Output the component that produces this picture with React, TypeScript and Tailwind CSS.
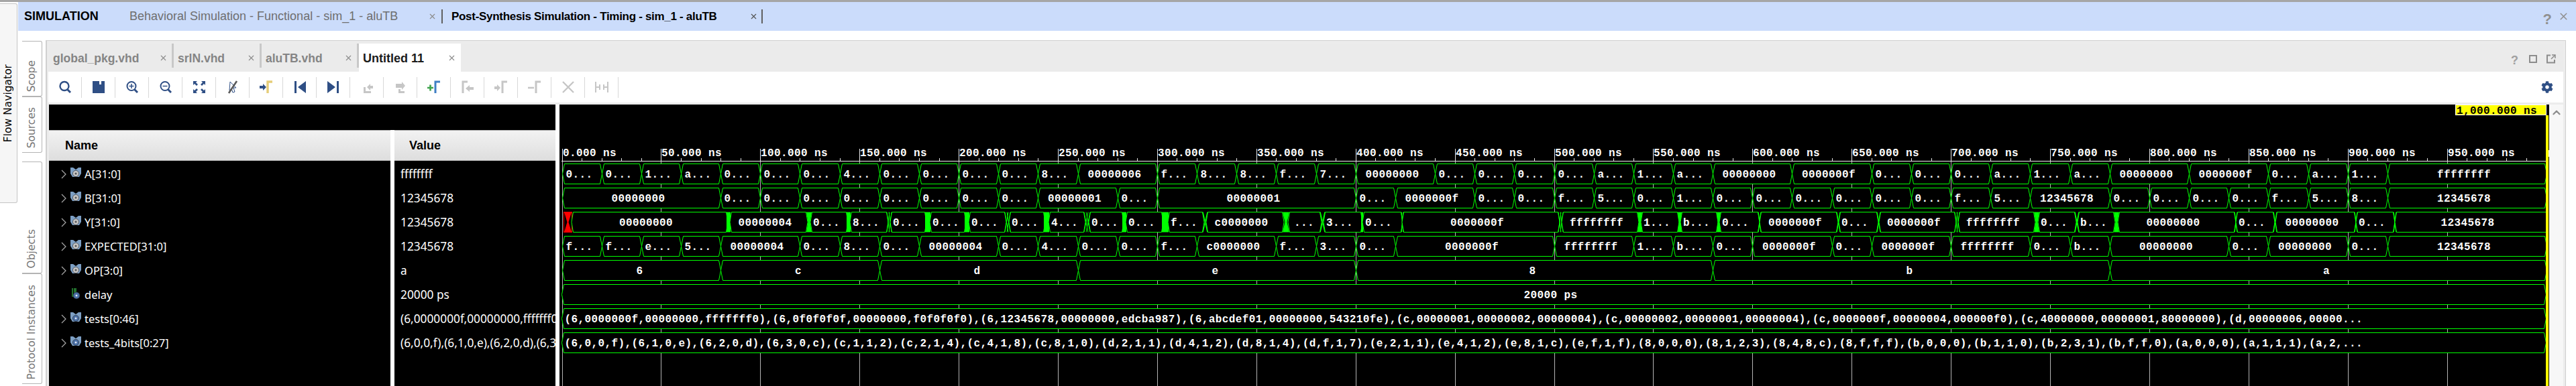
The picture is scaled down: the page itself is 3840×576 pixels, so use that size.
import { ChevronUp, X } from "lucide-react"
import { FaCog } from "react-icons/fa"

const GREEN = "#00ff00"
const NS20 = 59.16
const T0 = 837.5

const xAt = (i: number) => Math.round(T0 + NS20 * i) + 0.5

const rowA = "0 0 1 a 0 0 0 4 0 0 0 0 8 00000006*2 f 8 8 f 7 00000000*2 0 0 0 0 a 1 a 00000000*2 0000000f*2 0 0 0 a 1 a 00000000*2 0000000f*2 0 a 1 ffffffff*4"
const rowB = "00000000*4 0 0 0 0 0 0 0 0 00000001*2 0 00000001*5 0 0000000f*2 0 0 f 5 0 1 0 0 0 0 0 0 f 5 12345678*2 0 0 0 0 f 5 8 12345678*4"
const rowE = "f f e 5 00000004*2 0 8 0 00000004*2 0 4 0 0 f c0000000*2 f 3 0 0000000f*4 ffffffff*2 1 b 0 0000000f*2 0 0000000f*2 ffffffff*2 0 b 00000000*3 0 00000000*2 0 12345678*4"
const rowOp = "6*4 c*4 d*5 e*7 8*9 b*10 a*11"

const testsText =
  "(6,0000000f,00000000,fffffff0),(6,0f0f0f0f,00000000,f0f0f0f0),(6,12345678,00000000,edcba987),(6,abcdef01,00000000,543210fe),(c,00000001,00000002,00000004),(c,00000002,00000001,00000004),(c,0000000f,00000004,000000f0),(c,40000000,00000001,80000000),(d,00000006,00000..."
const tests4Text =
  "(6,0,0,f),(6,1,0,e),(6,2,0,d),(6,3,0,c),(c,1,1,2),(c,2,1,4),(c,4,1,8),(c,8,1,0),(d,2,1,1),(d,4,1,2),(d,8,1,4),(d,f,1,7),(e,2,1,1),(e,4,1,2),(e,8,1,c),(e,f,1,f),(8,0,0,0),(8,1,2,3),(8,4,8,c),(8,f,f,f),(b,0,0,0),(b,1,1,0),(b,2,3,1),(b,f,f,0),(a,0,0,0),(a,1,1,1),(a,2,..."

// Y row settles late, so it is read off by pixel: start, end, label, glitch after it
const rowY: [number, number, string, string][] = [
  [854, 1082, "00000000", "s"],
  [1090, 1201, "00000004", "h"],
  [1210, 1261, "0...", "s"],
  [1269, 1321, "8...", "m"],
  [1329, 1378, "0...", "s"],
  [1388, 1437, "0...", "s"],
  [1446, 1497, "0...", "m"],
  [1506, 1555, "0...", "s"],
  [1565, 1615, "4...", "m"],
  [1625, 1672, "0...", "s"],
  [1680, 1731, "0...", "s"],
  [1743, 1792, "f...", "x"],
  [1800, 1911, "c0000000", "h"],
  [1922, 1967, "...", "x"],
  [1975, 2028, "3...", "s"],
  [2033, 2088, "0...", "x"],
  [2092, 2322, "0000000f", "m"],
  [2330, 2440, "ffffffff", "h"],
  [2448, 2500, "1...", "h"],
  [2507, 2558, "b...", "h"],
  [2565, 2620, "0...", "x"],
  [2625, 2737, "0000000f", "x"],
  [2743, 2797, "0...", "x"],
  [2803, 2913, "0000000f", "m"],
  [2921, 3031, "ffffffff", "h"],
  [3040, 3092, "0...", "x"],
  [3099, 3150, "b...", "h"],
  [3159, 3330, "00000000", "x"],
  [3335, 3388, "0...", "x"],
  [3394, 3509, "00000000", "x"],
  [3514, 3567, "0...", "x"],
  [3572, 3795, "12345678", ""],
]

const waveText = "fill-white text-[16px] font-bold tracking-[0.4px]"

function hexPoints(x0: number, x1: number, top: number, slope: number) {
  const mid = top + 15
  const bot = top + 30
  return `${x0 - slope},${mid} ${x0},${top} ${x1},${top} ${x1 + slope},${mid} ${x1},${bot} ${x0},${bot}`
}

function Bus({ row, top }: { row: string; top: number }) {
  let idx = 0
  const y = top + 0.5
  return (
    <g>
      {row.split(" ").map((tok, n) => {
        const [label, s] = tok.split("*")
        const span = s ? Number(s) : 1
        const a = xAt(idx)
        const b = xAt(idx + span)
        idx += span
        const center = (a + b) / 2 - (label.length > 1 ? 5 : 3)
        return (
          <g key={n}>
            <polygon points={hexPoints(a + 3, b - 3, y, 3)} fill="black" stroke={GREEN} />
            {span === 1 ? (
              <text x={a + 5} y={top + 21} className={waveText}>{label + "..."}</text>
            ) : (
              <text x={center} y={top + 21} textAnchor="middle" className={waveText}>{label}</text>
            )}
          </g>
        )
      })}
    </g>
  )
}

function Glitch({ a, b, y, kind }: { a: number; b: number; y: number; kind: string }) {
  const bot = y + 30
  const mid = y + 15
  const c = (a + b) / 2
  if (kind === "s") return <rect x={a} y={y} width={b - a - 1} height={30} fill={GREEN} />
  if (kind === "h")
    return <polygon points={`${a},${y} ${b},${y} ${c + 1.5},${mid} ${b},${bot} ${a},${bot} ${c - 1.5},${mid}`} fill={GREEN} />
  if (kind === "m")
    return (
      <g stroke={GREEN}>
        <line x1={a} y1={y} x2={b - 3} y2={bot} />
        <line x1={b - 3} y1={y} x2={a} y2={bot} />
        <line x1={a + 3} y1={y} x2={b} y2={bot} />
        <line x1={b} y1={y} x2={a + 3} y2={bot} />
      </g>
    )
  return (
    <g stroke={GREEN} strokeWidth={1.4}>
      <line x1={a} y1={y} x2={b} y2={bot} />
      <line x1={b} y1={y} x2={a} y2={bot} />
    </g>
  )
}

function YBus({ top }: { top: number }) {
  const y = top + 0.5
  return (
    <g>
      <rect x={840.5} y={y} width={12} height={30} fill="black" stroke="#ff0000" />
      <polygon points={`841,${y} 852,${y} 847.5,${y + 15} 852,${y + 30} 841,${y + 30} 845.5,${y + 15}`} fill="#ff0000" />
      {rowY.map(([x0, x1, label, glitch], n) => {
        const long = label.length > 4
        return (
          <g key={n}>
            <polygon points={hexPoints(x0 + 0.5, x1 + 0.5, y, 2.5)} fill="black" stroke={GREEN} />
            {glitch && n < rowY.length - 1 && <Glitch a={x1 + 1} b={rowY[n + 1][0]} y={y} kind={glitch} />}
            {long ? (
              <text x={(x0 + x1) / 2 - 5} y={top + 21} textAnchor="middle" className={waveText}>{label}</text>
            ) : (
              <text x={label === "..." ? x0 + 7 : x0 + 2} y={top + 21} className={waveText}>{label}</text>
            )}
          </g>
        )
      })}
    </g>
  )
}

function TextBus({ top, children, center }: { top: number; children: string; center?: boolean }) {
  const y = top + 0.5
  return (
    <g>
      <polygon points={hexPoints(840.5, 3792.5, y, 3)} fill="black" stroke={GREEN} />
      {center ? (
        <text x={2311.5} y={top + 21} textAnchor="middle" className={waveText}>{children}</text>
      ) : (
        <text x={841.5} y={top + 21} className={waveText}>{children}</text>
      )}
    </g>
  )
}

function WaveView() {
  const majors = Array.from({ length: 20 }, (_, i) => i)
  const minors = Array.from({ length: 100 }, (_, i) => i).filter((i) => i % 5 !== 0)
  return (
    <svg viewBox="834 156 2966 420" className="w-[2966px] h-[420px] bg-black [font-family:'Liberation_Mono',monospace]">
      {majors.map((i) => {
        const x = xAt(i * 2.5)
        return (
          <g key={i}>
            <line x1={x} y1={240} x2={x} y2={576} stroke="#b4b4b4" />
            <line x1={x} y1={222} x2={x} y2={240} stroke="#e8e8e8" />
            <text x={x + 0.5} y={233} className={waveText}>{`${i * 50}.000 ns`}</text>
          </g>
        )
      })}
      {minors.map((i) => {
        const x = xAt(i * 0.5)
        return <line key={i} x1={x} y1={236} x2={x} y2={240} stroke="#e0e0e0" />
      })}
      <rect x={837} y={240} width={2958} height={1} fill="#f0f0f0" />
      <Bus row={rowA} top={244} />
      <Bus row={rowB} top={280} />
      <YBus top={316} />
      <Bus row={rowE} top={352} />
      <Bus row={rowOp} top={388} />
      <TextBus top={424} center>20000 ps</TextBus>
      <TextBus top={460}>{testsText}</TextBus>
      <TextBus top={496}>{tests4Text}</TextBus>
      {/* cursor */}
      <rect x={3798} y={224} width={2} height={10} fill="#e8e8e8" />
      <rect x={3795} y={172} width={4} height={404} fill="#ffff00" />
      <rect x={3660.5} y={156.5} width={135} height={15} fill="#ffff00" stroke="white" />
      <text x={3662} y={170} className="fill-black text-[16px] font-bold tracking-[0.4px]">1,000.000 ns</text>
    </svg>
  )
}

function BusIcon({ kind }: { kind: "v" | "c" | "g" }) {
  const prong = kind === "g" ? "#2f9e3f" : "#7d9fc4"
  const ball = kind === "v" ? "#c4c4c4" : "#4a6fa5"
  return (
    <svg width="16" height="17" viewBox="0 0 16 17" className="shrink-0">
      {kind === "g" ? (
        <path d="M3 0v12h3V0M8 0v8" fill="none" stroke={prong} strokeWidth="1.4" />
      ) : (
        <path d="M0 0h4l4 3 4-3h4v9l-3 5H3L0 9z" fill={prong} />
      )}
      <circle cx={kind === "g" ? 9 : 8} cy={kind === "g" ? 11 : 9} r={kind === "g" ? 5 : 4.6} fill={ball} stroke="#222" strokeWidth="0.6" />
      <circle cx={kind === "g" ? 9 : 8} cy={kind === "g" ? 11 : 9} r="1.5" fill={kind === "v" ? "#555" : "#dbe6f5"} />
    </svg>
  )
}

const signals: { name: string; value: string; kind: "v" | "c" | "g"; expand: boolean }[] = [
  { name: "A[31:0]", value: "ffffffff", kind: "v", expand: true },
  { name: "B[31:0]", value: "12345678", kind: "v", expand: true },
  { name: "Y[31:0]", value: "12345678", kind: "v", expand: true },
  { name: "EXPECTED[31:0]", value: "12345678", kind: "v", expand: true },
  { name: "OP[3:0]", value: "a", kind: "v", expand: true },
  { name: "delay", value: "20000 ps", kind: "g", expand: false },
  { name: "tests[0:46]", value: "(6,0000000f,00000000,fffffff0", kind: "c", expand: true },
  { name: "tests_4bits[0:27]", value: "(6,0,0,f),(6,1,0,e),(6,2,0,d),(6,3,0", kind: "c", expand: true },
]

const BLUE = "#2f4f85"
const OFF = "#c6c6c6"

function ToolIcon({ children }: { children: React.ReactNode }) {
  return (
    <svg width="24" height="24" viewBox="0 0 24 24" className="shrink-0">
      {children}
    </svg>
  )
}

const tools = [
  <>
    <circle cx="11" cy="10.5" r="6.5" fill="none" stroke={BLUE} strokeWidth="2.4" />
    <path d="M15.5 15.5l4.5 4.5" stroke={BLUE} strokeWidth="3" />
  </>,
  <path d="M3 3h18v18H3zM13 3v5h3V3z" fill={BLUE} fillRule="evenodd" />,
  <>
    <circle cx="11" cy="10.5" r="6.5" fill="none" stroke={BLUE} strokeWidth="2" />
    <path d="M15.5 15.5l4.5 4.5" stroke={BLUE} strokeWidth="3" />
    <path d="M11 7v7M7.5 10.5h7" stroke={BLUE} strokeWidth="1.5" />
  </>,
  <>
    <circle cx="11" cy="10.5" r="6.5" fill="none" stroke={BLUE} strokeWidth="2" />
    <path d="M15.5 15.5l4.5 4.5" stroke={BLUE} strokeWidth="3" />
    <path d="M7.5 10.5h7" stroke={BLUE} strokeWidth="1.5" />
  </>,
  <path d="M3 3h6L7 5l3 3-2 2-3-3-2 2zM21 3h-6l2 2-3 3 2 2 3-3 2 2zM3 21h6l-2-2 3-3-2-2-3 3-2-2zM21 21h-6l2-2-3-3 2-2 3 3 2-2z" fill={BLUE} />,
  <>
    <path d="M8 4l9 9h-4l2 6-3 1-2-6-3 3z" fill="none" stroke={BLUE} strokeWidth="1" />
    <path d="M18 3L6 21" stroke="#5a5a5a" strokeWidth="2.6" />
  </>,
  <>
    <path d="M2 10h5V7l5 5-5 5v-3H2z" fill={BLUE} />
    <path d="M14 21V4h7" fill="none" stroke="#e6cd78" strokeWidth="3.4" />
  </>,
  <path d="M4 3h3v18H4zM21 3v18L9 12z" fill={BLUE} />,
  <path d="M17 3h3v18h-3zM3 3v18l12-9z" fill={BLUE} />,
  <>
    <path d="M4 21h14v-3h-8v-6H7v9z" fill={OFF} />
    <path d="M12 12l5-5v3h4v4h-4v3z" fill={OFF} />
  </>,
  <>
    <path d="M4 21h14v-3h-6v-3H9v6z" fill={OFF} />
    <path d="M19 10l-5-6v3H5v6h9v3z" fill={OFF} />
  </>,
  <>
    <path d="M2 13h9M6.5 8.5v9" stroke="#3fa34d" strokeWidth="2.6" />
    <path d="M14 21V4h7" fill="none" stroke="#3f7fc4" strokeWidth="3" />
  </>,
  <>
    <path d="M5 21V4h7" fill="none" stroke={OFF} strokeWidth="3" />
    <path d="M9 14l6-5v3h6v4h-6v3z" fill={OFF} />
  </>,
  <>
    <path d="M14 21V4h7" fill="none" stroke={OFF} strokeWidth="3" />
    <path d="M2 11h4V8l5 5-5 5v-3H2z" fill={OFF} />
  </>,
  <>
    <path d="M2 13h9" stroke={OFF} strokeWidth="2.6" />
    <path d="M14 21V4h7" fill="none" stroke={OFF} strokeWidth="3" />
  </>,
  <path d="M4 4l16 16M20 4L4 20" stroke={OFF} strokeWidth="2.4" />,
  <path d="M3 4v16M21 4v16M3 12h6M15 12h6M9 8v8M15 8v8" fill="none" stroke={OFF} strokeWidth="2" />,
]

function FileTab({ label, width, closeRight }: { label: string; width: number; closeRight: number }) {
  return (
    <div className="relative flex items-center h-[36px] self-start pl-[6px] pt-[8px] border-r-[3px] border-[#c8c8c8] text-[#858585]" style={{ width }}>
      <span className="text-[17.5px] font-bold">{label}</span>
      <X className="absolute top-[15px] text-[#8a8a8a]" size={13} strokeWidth={2} style={{ right: closeRight }} />
    </div>
  )
}

function SideTab({ label, height }: { label: string; height: number }) {
  return (
    <div className="flex items-end justify-center pb-[6px] w-[30px] border-y border-r border-[#b4b4b4] rounded-r-[3px] text-[#777777]" style={{ height }}>
      <span className="[writing-mode:vertical-rl] rotate-180 text-[15.5px] [font-family:'DejaVu_Sans',sans-serif]">{label}</span>
    </div>
  )
}

export default function App() {
  return (
    <div className="w-[3840px] h-[576px] overflow-hidden bg-white [font-family:'Liberation_Sans',Arial,sans-serif]">
      <div className="h-[3px] bg-[#a6a6a6]"></div>
      <div className="flex h-[573px]">
        {/* Flow Navigator rail */}
        <div className="w-[27px] shrink-0">
          <div className="flex items-center justify-center w-[26px] h-[298px] mt-[2px] bg-[#f6f6f6] border-r border-y border-[#c4c4c4] rounded-r-[3px]">
            <span className="[writing-mode:vertical-rl] rotate-180 text-[15.5px] text-black [font-family:'DejaVu_Sans',sans-serif]">Flow Navigator</span>
          </div>
        </div>

        <div className="flex-1 min-w-0 flex flex-col">
          {/* Title bar */}
          <div className="relative flex items-center h-[43px] bg-[#cbdcfb] text-[18px]">
            <span className="ml-[9px] w-[157px] font-bold text-black">SIMULATION</span>
            <span className="w-[445px] text-[#6f6f6f]">Behavioral Simulation - Functional - sim_1 - aluTB</span>
            <X className="text-[#8a8a8a] mr-[7px]" size={13} strokeWidth={2} />
            <div className="w-[2px] h-[21px] bg-[#606060] mr-[13px]"></div>
            <span className="w-[444px] text-[17px] tracking-[-0.3px] font-bold text-black">Post-Synthesis Simulation - Timing - sim_1 - aluTB</span>
            <X className="text-[#505050] mr-[5px]" size={13} strokeWidth={2} />
            <div className="w-[2px] h-[21px] bg-[#606060]"></div>
            <span className="absolute right-[36px] top-[9px] text-[22px] font-bold text-[#909090]">?</span>
            <X className="absolute right-[10px] top-[13px] text-[#909090]" size={17} strokeWidth={2.2} />
          </div>

          <div className="flex flex-1 min-h-0 pt-[14px]">
            {/* Side tabs */}
            <div className="w-[41px] shrink-0 pl-[6px] pt-[1px] flex flex-col">
              <SideTab label="Scope" height={83} />
              <SideTab label="Sources" height={84} />
              <div className="h-[13px]"></div>
              <SideTab label="Objects" height={167} />
              <SideTab label="Protocol Instances" height={165} />
            </div>

            {/* Main panel */}
            <div className="w-[3757px] shrink-0 flex flex-col border-t border-r border-l-2 border-[#d0d0d0] bg-[#ececec] pl-[3px] pr-[3px] pt-[4px]">
              {/* Tab strip */}
              <div className="relative flex h-[42px] shrink-0 bg-[#ebebeb]">
                <FileTab label="global_pkg.vhd" width={186} closeRight={6} />
                <FileTab label="srlN.vhd" width={131} closeRight={6} />
                <FileTab label="aluTB.vhd" width={145} closeRight={6} />
                <div className="relative flex items-center w-[152px] bg-white pl-[6px] pt-[2px]">
                  <span className="text-[18px] font-bold text-[#1c1c1c]">Untitled 11</span>
                  <X className="absolute right-[7px] top-[15px] text-[#8a8a8a]" size={13} strokeWidth={2} />
                </div>
                <span className="absolute right-[67px] top-[12px] text-[18px] font-bold text-[#a0a0a0]">?</span>
                <div className="absolute right-[39px] top-[17px] w-[12px] h-[12px] border-2 border-[#8c8c8c]"></div>
                <svg className="absolute right-[11px] top-[16px]" width="14" height="14" viewBox="0 0 14 14">
                  <path d="M6 1.5H1v11h11V8" fill="none" stroke="#8c8c8c" strokeWidth="2" />
                  <path d="M7 7l5-5M8 1h5v5" fill="none" stroke="#8c8c8c" strokeWidth="1.5" />
                </svg>
              </div>

              {/* Toolbar */}
              <div className="relative flex items-center h-[46px] shrink-0 bg-white ml-[-1px]">
                {tools.map((icon, i) => (
                  <div key={i} className="flex items-center w-[50px] shrink-0">
                    <div className="flex justify-center w-[49px]">
                      <ToolIcon>{icon}</ToolIcon>
                    </div>
                    <div className="w-[1px] h-[31px] bg-[#d8d8d8]"></div>
                  </div>
                ))}
                <FaCog className="absolute right-[15px] top-[14px] text-[#2f4f85]" size={18} />
              </div>
              <div className="h-[3px] shrink-0"></div>

              {/* Waveform window */}
              <div className="flex h-[420px] shrink-0 bg-white">
                <div className="w-[755px] shrink-0 flex flex-col">
                  <div className="h-[38px] bg-black"></div>
                  <div className="flex h-[46px] text-[18px] font-bold text-black">
                    <div className="flex items-center w-[509px] pl-[24px] bg-gradient-to-b from-[#f2f2f2] to-[#dedede] border-y border-[#b4b4b4]">Name</div>
                    <div className="w-[6px]"></div>
                    <div className="flex items-center w-[240px] pl-[22px] bg-gradient-to-b from-[#f2f2f2] to-[#dedede] border-y border-[#b4b4b4]">Value</div>
                  </div>
                  <div className="flex flex-1 min-h-0 [font-family:'Noto_Sans',sans-serif]">
                    <div className="w-[509px] bg-black pt-[2px]">
                      {signals.map((s) => (
                        <div key={s.name} className="flex items-center h-[36px] text-white text-[16.5px]">
                          <div className="w-[32px] flex justify-end pr-[6px]">
                            {s.expand && (
                              <svg width="8" height="14" viewBox="0 0 8 14">
                                <path d="M1 1l6 6-6 6" fill="none" stroke="#a8a8a8" strokeWidth="1.2" />
                              </svg>
                            )}
                          </div>
                          <div className="w-[21px] -mt-[4px]">
                            <BusIcon kind={s.kind} />
                          </div>
                          <span>{s.name}</span>
                        </div>
                      ))}
                    </div>
                    <div className="w-[6px]"></div>
                    <div className="w-[240px] bg-black pt-[2px] overflow-hidden">
                      {signals.map((s) => (
                        <div key={s.name} className="flex items-center h-[36px] pl-[9px] text-white text-[17.3px] whitespace-nowrap">{s.value}</div>
                      ))}
                    </div>
                  </div>
                </div>
                <div className="w-[6px] shrink-0"></div>
                <WaveView />
                <div className="w-[21px] shrink-0 bg-[#f7f7f7] flex justify-center pt-[3px]">
                  <ChevronUp className="text-[#8c8c8c]" size={18} strokeWidth={3} />
                </div>
              </div>
            </div>
          </div>
        </div>
      </div>
    </div>
  )
}
